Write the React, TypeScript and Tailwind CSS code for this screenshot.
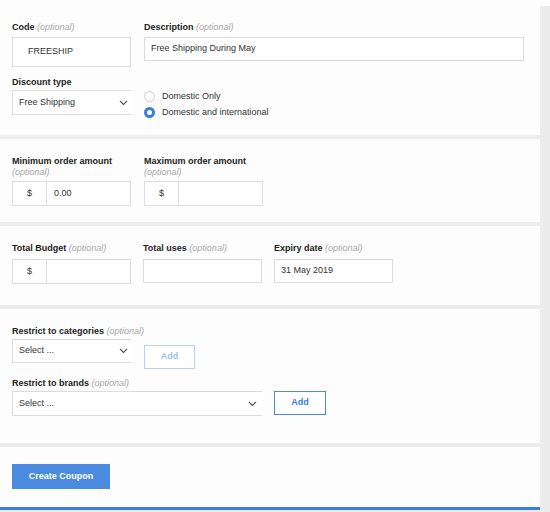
import React from "react";

const Opt = () => <span className="italic font-normal text-[#a8a8a8]">(optional)</span>;

const Chevron = () => (
  <svg width="9" height="6" viewBox="0 0 9 6" className="shrink-0"><path d="M1 1l3.5 3.5L8 1" fill="none" stroke="#555" strokeWidth="1.1" /></svg>
);

const Sep = () => <div className="h-[4px] bg-[#ececec]" />;

const Money = ({ v }: { v?: string }) => (
  <div className="flex w-[119px] h-[25px] border border-[#dcdcdc] bg-white text-[9px] text-[#333]">
    <div className="w-[34px] border-r border-[#dcdcdc] flex items-center justify-center">$</div>
    <div className="flex items-center pl-[7px]">{v}</div>
  </div>
);

export default function App() {
  return (
    <div className="w-[550px] h-[512px] flex bg-white overflow-hidden" style={{ fontFamily: "'Liberation Sans', Arial, sans-serif" }}>
      <div className="w-[540px] flex flex-col">
        <div className="h-[135px] bg-[#fdfdfd] px-[12px] pt-[21px]">
          <div className="flex gap-[13px]">
            <div>
              <div className="text-[9px] font-bold text-[#222] h-[16px]">Code <Opt /></div>
              <div className="w-[119px] h-[30px] border border-[#dcdcdc] bg-white flex items-center pl-[15px] text-[9px] text-[#333]">FREESHIP</div>
            </div>
            <div>
              <div className="text-[9px] font-bold text-[#222] h-[16px]">Description <Opt /></div>
              <div className="w-[380px] h-[24px] border border-[#dcdcdc] bg-white flex items-center pl-[6px] text-[9px] text-[#333]">Free Shipping During May</div>
            </div>
          </div>
          <div className="text-[9px] font-bold text-[#222] mt-[9px] h-[14px]">Discount type</div>
          <div className="flex gap-[13px]">
            <div className="w-[119px] h-[25px] border-y border-l border-[#dcdcdc] bg-white flex items-center justify-between pl-[6px] pr-[3px] text-[9px] text-[#333]">
              Free Shipping <Chevron />
            </div>
            <div className="flex flex-col gap-[5px] pt-[1px] text-[9px] leading-[11px] text-[#333]">
              <div className="flex items-center gap-[7px]"><span className="w-[11px] h-[11px] rounded-full border border-[#ccc] bg-white" />Domestic Only</div>
              <div className="flex items-center gap-[7px]"><span className="w-[11px] h-[11px] rounded-full border-[3px] border-[#3a7de0] bg-white" />Domestic and international</div>
            </div>
          </div>
        </div>
        <Sep />
        <div className="h-[83px] bg-[#fdfdfd] px-[12px] pt-[17px] flex gap-[13px]">
          <div>
            <div className="text-[9px] font-bold text-[#222] leading-[11px]">Minimum order amount</div>
            <div className="text-[9px] leading-[11px] mb-[3px]"><Opt /></div>
            <Money v="0.00" />
          </div>
          <div>
            <div className="text-[9px] font-bold text-[#222] leading-[11px]">Maximum order amount</div>
            <div className="text-[9px] leading-[11px] mb-[3px]"><Opt /></div>
            <Money />
          </div>
        </div>
        <Sep />
        <div className="h-[79px] bg-[#fdfdfd] px-[12px] pt-[16px] flex gap-[12px]">
          <div>
            <div className="text-[9px] font-bold text-[#222] h-[17px]">Total Budget <Opt /></div>
            <Money />
          </div>
          <div>
            <div className="text-[9px] font-bold text-[#222] h-[17px]">Total uses <Opt /></div>
            <div className="w-[119px] h-[24px] border border-[#dcdcdc] bg-white" />
          </div>
          <div>
            <div className="text-[9px] font-bold text-[#222] h-[17px]">Expiry date <Opt /></div>
            <div className="w-[119px] h-[24px] border border-[#dcdcdc] bg-white flex items-center pl-[6px] text-[9px] text-[#333]">31 May 2019</div>
          </div>
        </div>
        <Sep />
        <div className="h-[134px] bg-[#fdfdfd] px-[12px] pt-[16px]">
          <div className="text-[9px] font-bold text-[#222] h-[14px]">Restrict to categories <Opt /></div>
          <div className="flex gap-[13px]">
            <div className="w-[119px] h-[24px] border-y border-l border-[#dcdcdc] bg-white flex items-center justify-between pl-[6px] pr-[3px] text-[9px] text-[#333]">Select ... <Chevron /></div>
            <div className="mt-[6px] w-[51px] h-[24px] border border-[#b7d0f4] bg-white flex items-center justify-center text-[9px] font-bold text-[#9dbff0]">Add</div>
          </div>
          <div className="text-[9px] font-bold text-[#222] mt-[8px] h-[14px]">Restrict to brands <Opt /></div>
          <div className="flex gap-[12px]">
            <div className="w-[250px] h-[25px] border-y border-l border-[#dcdcdc] bg-white flex items-center justify-between pl-[6px] pr-[5px] text-[9px] text-[#333]">Select ... <Chevron /></div>
            <div className="w-[52px] h-[24px] border border-[#4a8ae0] bg-white flex items-center justify-center text-[9px] font-bold text-[#3a7de0]">Add</div>
          </div>
        </div>
        <Sep />
        <div className="h-[60px] bg-[#fdfdfd] px-[12px] pt-[17px]">
          <div className="w-[98px] h-[25px] bg-[#4a8ae0] flex items-center justify-center text-[9px] font-bold text-white">Create Coupon</div>
        </div>
        <div className="h-[3px] bg-[#3a7de0]" />
        <div className="flex-1 bg-[#ececec]" />
      </div>
      <div className="w-[10px] flex flex-col">
        <div className="h-[6px] bg-white" />
        <div className="flex-1 bg-[#ececec]" />
      </div>
    </div>
  );
}
